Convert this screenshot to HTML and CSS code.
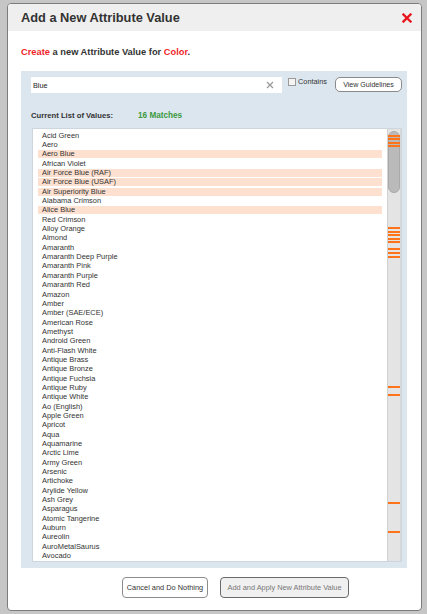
FILE: index.html
```html
<!DOCTYPE html>
<html>
<head>
<meta charset="utf-8">
<link rel="stylesheet" href="styles.css">
</head>
<body>
<div class="dialog">
  <div class="header">
    <h1 class="title">Add a New Attribute Value</h1>
    <span class="close"><svg width="10" height="10" viewBox="0 0 10 10"><path d="M1.5 1.5 L8.5 8.5 M8.5 1.5 L1.5 8.5" stroke="#e8161c" stroke-width="2.3" stroke-linecap="square" fill="none"/></svg></span>
  </div>
  <div class="body">
    <p class="intro"><span class="red">Create</span> a new Attribute Value for <span class="red">Color</span>.</p>
    <div class="panel">
      <div class="search-row">
        <div class="search-box">
          <span class="search-text">Blue</span>
          <svg class="clear" width="8" height="8" viewBox="0 0 8 8"><path d="M1 1 L7 7 M7 1 L1 7" stroke="#9a9a9a" stroke-width="1.3" fill="none"/></svg>
        </div>
        <span class="checkbox"></span>
        <span class="contains">Contains</span>
        <span class="btn guide">View Guidelines</span>
      </div>
      <div class="list-head">
        <span class="list-label">Current List of Values:</span>
        <span class="matches">16 Matches</span>
      </div>
      <div class="list">
        <ul class="items">
          <li class="item">Acid Green</li>
          <li class="item">Aero</li>
          <li class="item hit">Aero Blue</li>
          <li class="item">African Violet</li>
          <li class="item hit">Air Force Blue (RAF)</li>
          <li class="item hit">Air Force Blue (USAF)</li>
          <li class="item hit">Air Superiority Blue</li>
          <li class="item">Alabama Crimson</li>
          <li class="item hit">Alice Blue</li>
          <li class="item">Red Crimson</li>
          <li class="item">Alloy Orange</li>
          <li class="item">Almond</li>
          <li class="item">Amaranth</li>
          <li class="item">Amaranth Deep Purple</li>
          <li class="item">Amaranth Pink</li>
          <li class="item">Amaranth Purple</li>
          <li class="item">Amaranth Red</li>
          <li class="item">Amazon</li>
          <li class="item">Amber</li>
          <li class="item">Amber (SAE/ECE)</li>
          <li class="item">American Rose</li>
          <li class="item">Amethyst</li>
          <li class="item">Android Green</li>
          <li class="item">Anti-Flash White</li>
          <li class="item">Antique Brass</li>
          <li class="item">Antique Bronze</li>
          <li class="item">Antique Fuchsia</li>
          <li class="item">Antique Ruby</li>
          <li class="item">Antique White</li>
          <li class="item">Ao (English)</li>
          <li class="item">Apple Green</li>
          <li class="item">Apricot</li>
          <li class="item">Aqua</li>
          <li class="item">Aquamarine</li>
          <li class="item">Arctic Lime</li>
          <li class="item">Army Green</li>
          <li class="item">Arsenic</li>
          <li class="item">Artichoke</li>
          <li class="item">Arylide Yellow</li>
          <li class="item">Ash Grey</li>
          <li class="item">Asparagus</li>
          <li class="item">Atomic Tangerine</li>
          <li class="item">Auburn</li>
          <li class="item">Aureolin</li>
          <li class="item">AuroMetalSaurus</li>
          <li class="item">Avocado</li>
        </ul>
        <div class="scrollbar">
          <div class="thumb"></div>
          <span class="mark" style="top:6px"></span>
          <span class="mark" style="top:9px"></span>
          <span class="mark" style="top:12.5px"></span>
          <span class="mark" style="top:16px"></span>
          <span class="mark" style="top:98px"></span>
          <span class="mark" style="top:101.5px"></span>
          <span class="mark" style="top:105px"></span>
          <span class="mark" style="top:108.5px"></span>
          <span class="mark" style="top:112px"></span>
          <span class="mark" style="top:119px"></span>
          <span class="mark" style="top:123px"></span>
          <span class="mark" style="top:127px"></span>
          <span class="mark" style="top:257px"></span>
          <span class="mark" style="top:265px"></span>
          <span class="mark" style="top:373px"></span>
          <span class="mark" style="top:402px"></span>
        </div>
      </div>
    </div>
  </div>
  <div class="footer">
    <span class="btn cancel">Cancel and Do Nothing</span>
    <span class="btn apply">Add and Apply New Attribute Value</span>
  </div>
</div>
</body>
</html>
```
FILE: styles.css
```css
html, body {
  margin: 0;
  height: 100%;
}
body {
  background: #c6c6c6;
  font-family: "Liberation Sans", Arial, sans-serif;
  padding: 3px 0 0 7px;
  box-sizing: border-box;
  color: #333;
}
.dialog {
  width: 415px;
  height: 608px;
  box-sizing: border-box;
  border: 1px solid #7c7c7c;
  border-radius: 4px;
  background: #fff;
  display: flex;
  flex-direction: column;
  overflow: hidden;
}
.header {
  height: 27px;
  flex: none;
  background: #efefef;
  display: flex;
  align-items: center;
  justify-content: space-between;
  padding: 0 9px 0 13px;
}
.title {
  margin: 0;
  font-size: 12.8px;
  font-weight: bold;
  color: #333;
}
.close {
  display: flex;
}
.body {
  padding: 0 14px 0 13px;
}
.intro {
  margin: 15px 0 13px;
  font-size: 9.3px;
  line-height: 12px;
  font-weight: bold;
  color: #333;
}
.red {
  color: #f0262a;
}
.panel {
  height: 497px;
  box-sizing: border-box;
  background: #dce6ef;
  padding: 6px 5px 6px 10px;
  display: flex;
  flex-direction: column;
}
.search-row {
  display: flex;
  align-items: flex-start;
  height: 16px;
}
.search-box {
  width: 251px;
  height: 16px;
  box-sizing: border-box;
  background: #fff;
  display: flex;
  align-items: center;
  justify-content: space-between;
  padding: 0 8px 0 2px;
}
.search-text {
  font-size: 7.3px;
  color: #222;
}
.checkbox {
  width: 8px;
  height: 8px;
  box-sizing: border-box;
  border: 1px solid #9a9a9a;
  background: #f4f4f4;
  margin: 1px 0 0 6px;
}
.contains {
  font-size: 7.35px;
  margin: 1px 0 0 2px;
  line-height: 8px;
}
.btn {
  display: flex;
  align-items: center;
  justify-content: center;
  box-sizing: border-box;
  white-space: nowrap;
}
.guide {
  margin-left: auto;
  width: 67px;
  height: 15px;
  border: 1px solid #8a8a8a;
  border-radius: 5px;
  background: #fff;
  font-size: 7.1px;
  color: #333;
}
.list-head {
  margin: 17px 0 8px;
  height: 10px;
  display: flex;
  align-items: center;
  font-weight: bold;
}
.list-label {
  font-size: 7.7px;
  color: #333;
}
.matches {
  font-size: 8.2px;
  color: #3b9a3e;
  margin-left: 25px;
}
.list {
  flex: 1;
  display: flex;
  background: #fff;
  border: 1px solid #cdd6de;
  margin-left: 1px;
  overflow: hidden;
}
.items {
  list-style: none;
  margin: 0 5px 0 0;
  padding: 2px 0 0 5px;
  flex: 1;
  overflow: hidden;
}
.item {
  font-size: 7.45px;
  line-height: 8px;
  padding: 0.68px 0;
  text-indent: 4px;
  background-clip: content-box;
  white-space: nowrap;
  color: #333;
}
.item.hit {
  background-color: #fde0cf;
}
.scrollbar {
  width: 14px;
  flex: none;
  position: relative;
  background: #e4e4e4;
  border-left: 1px solid #d2d2d2;
  border-right: 1px solid #d8d8d8;
  box-sizing: border-box;
}
.thumb {
  margin: 2px 0 0 0;
  height: 62px;
  box-sizing: border-box;
  background: #bababa;
  border: 1px solid #a9a9a9;
  border-radius: 6px;
}
.mark {
  position: absolute;
  left: 0;
  right: 0;
  height: 2px;
  background: #ff7418;
}
.footer {
  display: flex;
  justify-content: flex-end;
  gap: 12px;
  padding: 9px 72px 0 0;
}
.cancel {
  width: 86px;
  height: 21px;
  border: 1px solid #8c8c8c;
  border-radius: 4px;
  background: #fff;
  font-size: 7.4px;
  color: #333;
}
.apply {
  width: 129px;
  height: 21px;
  border: 1px solid #6a6a6a;
  border-radius: 4px;
  background: #f0f0f0;
  font-size: 7.4px;
  color: #777;
}
```
